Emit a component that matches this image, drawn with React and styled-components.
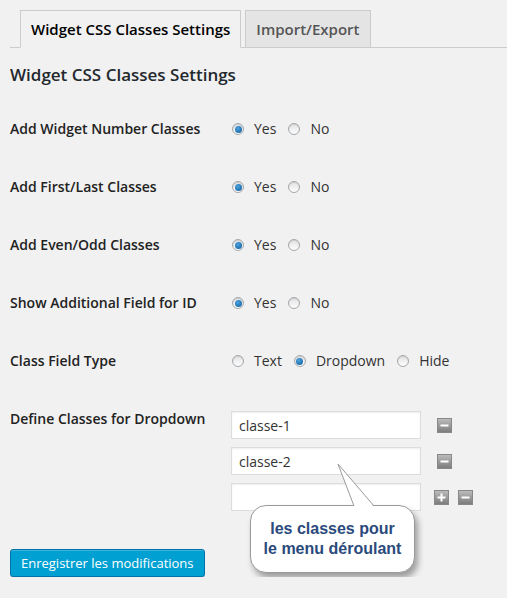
import styled, { createGlobalStyle } from 'styled-components'

const GlobalStyle = createGlobalStyle`
  body {
    margin: 0;
    background: #f1f1f1;
    font-family: 'Open Sans', 'DejaVu Sans', sans-serif;
    color: #444;
  }
`

const Wrap = styled.div`
  padding: 10px 0 0 10px;
`

const TabNav = styled.div`
  display: flex;
  padding-left: 10px;
  border-bottom: 1px solid #ccc;
`

const Tab = styled.div`
  padding: 5px 10px;
  margin-right: 4px;
  margin-bottom: -1px;
  line-height: 26px;
  font-size: 15px;
  font-weight: 600;
  border: 1px solid #ccc;
  border-bottom-color: ${(p) => (p.$active ? '#f1f1f1' : '#ccc')};
  background: ${(p) => (p.$active ? '#f1f1f1' : '#e4e4e4')};
  color: ${(p) => (p.$active ? '#000' : '#555')};
`

const Heading = styled.h2`
  margin: 15px 0 13px;
  font-size: 17px;
  line-height: 24px;
  font-weight: 600;
  color: #23282d;
`

const Row = styled.div`
  display: grid;
  grid-template-columns: 221px 1fr;
  padding: ${(p) => (p.$top ? '0 0 20px' : '20px 0')};
  line-height: 18px;
  font-size: 14px;
`

const Label = styled.div`
  font-weight: 600;
  color: #222;
  padding-top: ${(p) => (p.$top ? '19px' : '0')};
  line-height: ${(p) => (p.$top ? '20px' : '18px')};
`

const Options = styled.div`
  display: flex;
  align-items: center;
`

const Option = styled.label`
  display: flex;
  align-items: center;
  margin-right: 11px;
  color: #333;
`

const Radio = styled.span`
  box-sizing: border-box;
  width: 12px;
  height: 12px;
  margin: 0 10px 0 1px;
  border-radius: 50%;
  border: 1px solid #a4a8ac;
  background: linear-gradient(#e2e2e2, #fdfdfd);
  box-shadow: inset 0 1px 1px rgba(0, 0, 0, 0.1);
  display: flex;
  align-items: center;
  justify-content: center;

  &::after {
    content: '';
    display: ${(p) => (p.$checked ? 'block' : 'none')};
    width: 7px;
    height: 7px;
    border-radius: 50%;
    background: radial-gradient(circle at 40% 35%, #4aa3e0, #0f5896);
  }
`

const ClassList = styled.div`
  position: relative;
  padding-top: 21px;
  display: flex;
  flex-direction: column;
  gap: 8px;
`

const ClassRow = styled.div`
  display: flex;
  align-items: center;
`

const TextInput = styled.input`
  box-sizing: border-box;
  width: 190px;
  height: 28px;
  padding: 0 7px;
  border: 1px solid #ddd;
  box-shadow: inset 0 1px 2px rgba(0, 0, 0, 0.07);
  background: #fff;
  font-family: 'Open Sans', sans-serif;
  font-size: 14px;
  color: #333;
  outline: none;
`

const IconBtn = styled.span`
  display: flex;
  margin-left: ${(p) => p.$gap}px;
`

const Bubble = styled.div`
  position: absolute;
  left: 19px;
  top: 115px;
  width: 165px;
  height: 68px;
  box-sizing: border-box;
  padding-top: 13px;
  background: #fff;
  border: 1px solid #9a9a9a;
  border-radius: 16px;
  box-shadow: 3px 5px 6px rgba(0, 0, 0, 0.35);
  text-align: center;
  font-family: 'Liberation Sans', Arial, sans-serif;
  font-weight: bold;
  font-size: 16px;
  line-height: 20px;
  color: #2b4a7c;
`

const Tail = styled.svg`
  position: absolute;
  left: 85px;
  top: -43px;
`

const SaveButton = styled.button`
  margin-top: 18px;
  height: 28px;
  padding: 0 10px;
  border: 1px solid #0073aa;
  border-radius: 3px;
  background: #00a0d2;
  box-shadow: inset 0 1px 0 rgba(120, 200, 230, 0.5), 0 1px 0 rgba(0, 0, 0, 0.15);
  color: #fff;
  font-family: 'Open Sans', sans-serif;
  font-size: 13px;
  line-height: 26px;
`

const SquareIcon = ({ plus }) => (
  <svg width='15' height='15' viewBox='0 0 15 15'>
    <defs>
      <linearGradient id={plus ? 'gp' : 'gm'} x1='0' y1='0' x2='0' y2='1'>
        <stop offset='0' stopColor='#bdbdbd' />
        <stop offset='1' stopColor='#7a7a7a' />
      </linearGradient>
    </defs>
    <rect x='0.5' y='0.5' width='14' height='14' fill={`url(#${plus ? 'gp' : 'gm'})`} stroke='#888' />
    <rect x='3.5' y='6.5' width='8' height='2' fill='#fff' />
    {plus && <rect x='6.5' y='3.5' width='2' height='8' fill='#fff' />}
  </svg>
)

const RadioGroup = ({ options, checked }) => (
  <Options>
    {options.map((o) => (
      <Option key={o}>
        <Radio $checked={o === checked} />
        {o}
      </Option>
    ))}
  </Options>
)

const rows = [
  ['Add Widget Number Classes', ['Yes', 'No'], 'Yes'],
  ['Add First/Last Classes', ['Yes', 'No'], 'Yes'],
  ['Add Even/Odd Classes', ['Yes', 'No'], 'Yes'],
  ['Show Additional Field for ID', ['Yes', 'No'], 'Yes'],
  ['Class Field Type', ['Text', 'Dropdown', 'Hide'], 'Dropdown'],
]

export default function App() {
  return (
    <Wrap>
      <GlobalStyle />
      <TabNav>
        <Tab $active>Widget CSS Classes Settings</Tab>
        <Tab>Import/Export</Tab>
      </TabNav>
      <Heading>Widget CSS Classes Settings</Heading>

      {rows.map(([label, opts, checked]) => (
        <Row key={label}>
          <Label>{label}</Label>
          <RadioGroup options={opts} checked={checked} />
        </Row>
      ))}

      <Row $top>
        <Label $top>Define Classes for Dropdown</Label>
        <ClassList>
          <ClassRow>
            <TextInput defaultValue='classe-1' />
            <IconBtn $gap={16}><SquareIcon /></IconBtn>
          </ClassRow>
          <ClassRow>
            <TextInput defaultValue='classe-2' />
            <IconBtn $gap={16}><SquareIcon /></IconBtn>
          </ClassRow>
          <ClassRow>
            <TextInput defaultValue='' />
            <IconBtn $gap={13}><SquareIcon plus /></IconBtn>
            <IconBtn $gap={9}><SquareIcon /></IconBtn>
          </ClassRow>
          <Bubble>
            <Tail width='40' height='45' viewBox='0 0 40 45'>
              <polygon points='2,1 18,44 38,44' fill='#fff' />
              <polyline points='18,43 2,1 38,43' fill='none' stroke='#9a9a9a' strokeWidth='1' />
            </Tail>
            les classes pour
            <br />
            le menu déroulant
          </Bubble>
        </ClassList>
      </Row>

      <SaveButton>Enregistrer les modifications</SaveButton>
    </Wrap>
  )
}
